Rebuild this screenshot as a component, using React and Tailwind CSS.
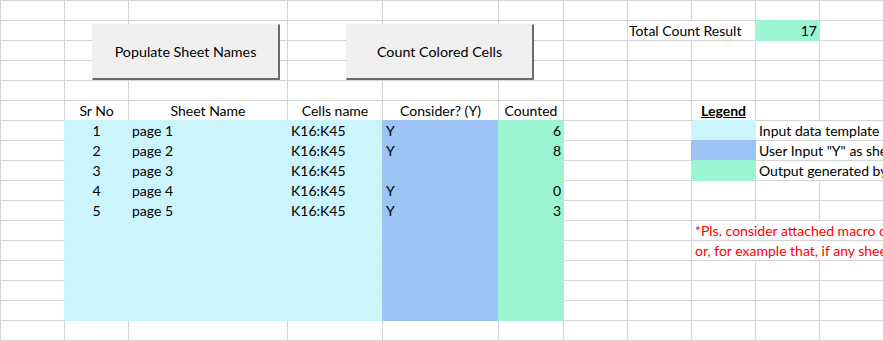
const COLS = [64, 64, 159, 95, 116, 65, 64, 64, 64, 64, 64];

// fill per cell: 'c' light cyan, 'b' blue, 'g' green
const fills = {};
for (let r = 6; r <= 15; r++) {
  fills[`${r}-1`] = 'c';
  fills[`${r}-2`] = 'c';
  fills[`${r}-3`] = 'c';
  fills[`${r}-4`] = 'b';
  fills[`${r}-5`] = 'g';
}
fills['6-8'] = 'c';
fills['7-8'] = 'b';
fills['8-8'] = 'g';
fills['1-9'] = 'g';

const bgClass = { c: 'bg-[#ccf4fc]', b: 'bg-[#9bc4f5]', g: 'bg-[#9bf5d2]' };
const rightClass = { c: 'border-r-[#ccf4fc]', b: 'border-r-[#9bc4f5]', g: 'border-r-[#9bf5d2]', x: 'border-r-[#d4d4d4]' };
const bottomClass = { c: 'border-b-[#ccf4fc]', b: 'border-b-[#9bc4f5]', g: 'border-b-[#9bf5d2]', x: 'border-b-[#d4d4d4]' };

const headers = {
  1: { text: 'Sr No', align: 'center' },
  2: { text: 'Sheet Name', align: 'center' },
  3: { text: 'Cells name', align: 'center' },
  4: { text: 'Consider? (Y)', align: 'center' },
  5: { text: 'Counted', align: 'center' },
  8: { text: 'Legend', align: 'center', legend: true },
};

const data = [
  ['1', 'page 1', 'K16:K45', 'Y', '6'],
  ['2', 'page 2', 'K16:K45', 'Y', '8'],
  ['3', 'page 3', 'K16:K45', '', ''],
  ['4', 'page 4', 'K16:K45', 'Y', '0'],
  ['5', 'page 5', 'K16:K45', 'Y', '3'],
];

const legendText = {
  6: 'Input data template',
  7: 'User Input "Y" as sheet to be considered',
  8: 'Output generated by macro',
};

const noteText = {
  11: '*Pls. consider attached macro only as reference',
  12: 'or, for example that, if any sheet is not present',
};

function buildRow(r) {
  const cells = [];
  let c = 0;
  while (c < COLS.length) {
    let cell = { c, span: 1, text: '', align: 'left' };
    if (r === 1 && c === 7) cell = { ...cell, span: 2, text: 'Total Count Result', tight: true };
    if (r === 1 && c === 9) cell = { ...cell, text: '17', align: 'right' };
    if (r === 5 && headers[c]) cell = { ...cell, ...headers[c] };
    if (r >= 6 && r <= 10 && c >= 1 && c <= 5) {
      const v = data[r - 6][c - 1];
      cell = { ...cell, text: v, align: c === 1 ? 'center' : c === 5 ? 'right' : 'left' };
    }
    if (legendText[r] && c === 9) cell = { ...cell, span: 2, text: legendText[r] };
    if (noteText[r] && c === 8) cell = { ...cell, span: 3, text: noteText[r], red: true };
    cells.push(cell);
    c += cell.span;
  }
  return cells;
}

function Cell({ r, cell }) {
  const last = cell.c + cell.span - 1;
  const own = fills[`${r}-${cell.c}`];
  const right = fills[`${r}-${last + 1}`] || own || 'x';
  const below = fills[`${r + 1}-${cell.c}`] || own || 'x';
  let w = 0;
  for (let i = cell.c; i <= last; i++) w += COLS[i];

  const alignCls =
    cell.align === 'center'
      ? 'justify-center'
      : cell.align === 'right'
        ? 'justify-end pr-[2px]'
        : cell.tight
          ? 'justify-start pl-[1px]'
          : 'justify-start pl-[3px]';

  return (
    <div
      className={`h-[20px] shrink-0 border-r border-b flex items-end whitespace-nowrap leading-[18px] ${rightClass[right]} ${bottomClass[below]} ${own ? bgClass[own] : ''} ${alignCls}`}
      style={{ width: w }}
    >
      {cell.legend ? (
        <span className="font-bold underline">{cell.text}</span>
      ) : (
        <span className={cell.red ? 'text-[#ff0000]' : ''}>{cell.text}</span>
      )}
    </div>
  );
}

function SheetButton({ label }) {
  return (
    <div className="w-[188px] h-[56px] bg-[#f0f0f0] border-t border-l border-[#f0f0f0] border-r-2 border-b-2 border-r-[#6b6b6b] border-b-[#6b6b6b] flex items-center justify-center text-[14.3px]">
      {label}
    </div>
  );
}

export default function App() {
  const rowIdx = Array.from({ length: 17 }, (_, i) => i);
  return (
    <div className="relative w-[883px] h-[341px] overflow-hidden bg-white text-black text-[14px] font-['Lato','Liberation_Sans',sans-serif]">
      <div className="border-l border-t border-[#d4d4d4] w-max">
        {rowIdx.map((r) => (
          <div key={r} className="flex">
            {buildRow(r).map((cell) => (
              <Cell key={cell.c} r={r} cell={cell} />
            ))}
          </div>
        ))}
      </div>

      {/* macro buttons float over the sheet */}
      <div className="absolute left-[92px] top-[24px]">
        <SheetButton label="Populate Sheet Names" />
      </div>
      <div className="absolute left-[346px] top-[24px]">
        <SheetButton label="Count Colored Cells" />
      </div>
    </div>
  );
}
